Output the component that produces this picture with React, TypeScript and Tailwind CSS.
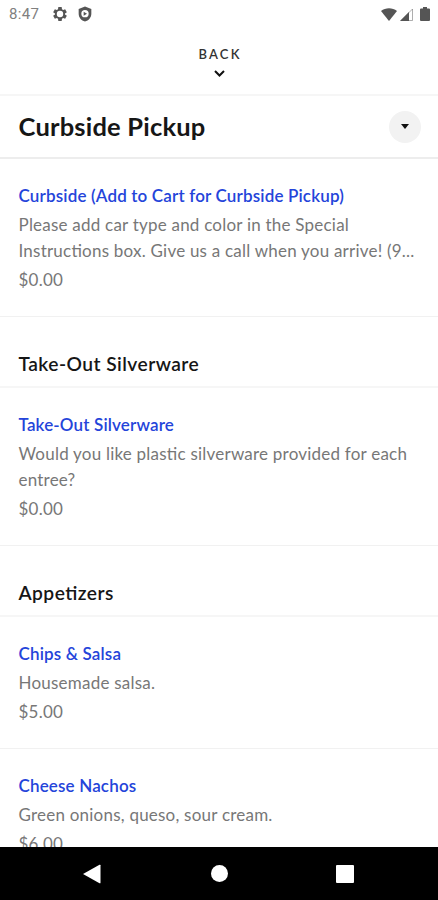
import React from 'react'

type Item = {
  name: string
  description: string
  price: string
}

type Section = {
  title?: string
  items: Item[]
}

const sections: Section[] = [
  {
    items: [
      {
        name: 'Curbside (Add to Cart for Curbside Pickup)',
        description:
          'Please add car type and color in the Special Instructions box. Give us a call when you arrive! (9...',
        price: '$0.00',
      },
    ],
  },
  {
    title: 'Take-Out Silverware',
    items: [
      {
        name: 'Take-Out Silverware',
        description: 'Would you like plastic silverware provided for each entree?',
        price: '$0.00',
      },
    ],
  },
  {
    title: 'Appetizers',
    items: [
      {
        name: 'Chips & Salsa',
        description: 'Housemade salsa.',
        price: '$5.00',
      },
      {
        name: 'Cheese Nachos',
        description: 'Green onions, queso, sour cream.',
        price: '$6.00',
      },
    ],
  },
]

function StatusBar() {
  return (
    <div className="flex h-7 shrink-0 items-center justify-between pl-[9px] pr-[8px] text-[#555]">
      <div className="flex items-center">
        <span className="w-[43px] font-[Roboto] text-[15px] tracking-[0.3px] text-[#808080]">8:47</span>
        <svg className="size-4" viewBox="0 0 24 24" fill="currentColor">
          <path
            fillRule="evenodd"
            d="M9.5 1.5h5l.5 3.500 1.800 1 2.900-1.100 2.600 4.500L19.500 11.200v1.600l2.800 1.800-2.600 4.500L16.800 18l-1.800 1-.5 3.500h-5L9 19l-1.800-1-2.900 1.100-2.600-4.500 2.800-1.800v-1.600L1.700 9.400l2.600-4.500L7.200 6 9 5zM12 7.200a4.800 4.800 0 1 0 0 9.600 4.800 4.800 0 0 0 0-9.600z"
          />
        </svg>
        <svg className="ml-[9px] size-4" viewBox="0 0 24 24" fill="currentColor">
          <path
            fillRule="evenodd"
            d="M12 .8 21.500 4.500v7c0 5.500-4 10.300-9.500 11.700C6.500 21.800 2.500 17 2.500 11.500v-7zM12 6a5.500 5.500 0 1 0 0 11 5.500 5.500 0 0 0 0-11zM10 8.500l5 3-5 3z"
          />
        </svg>
      </div>
      <div className="flex items-center">
        <svg className="h-[13px] w-4" viewBox="0 0 16 13" fill="currentColor">
          <path d="M0 3C4.500-.8 11.500-.8 16 3L8 13z" />
        </svg>
        <svg className="ml-[3px] h-[13px] w-[13px]" viewBox="0 0 13 13" fill="currentColor">
          <path d="M9 4v9H0z" />
          <path d="M12.500 1v11.500H1z" fill="none" stroke="currentColor" strokeWidth=".8" opacity=".6" />
        </svg>
        <svg className="ml-[7px] h-[14px] w-[10px]" viewBox="0 0 10 14" fill="currentColor">
          <path d="M3 0h4v1.500h2q1 0 1 1V13q0 1-1 1H1q-1 0-1-1V2.500q0-1 1-1h2z" />
        </svg>
      </div>
    </div>
  )
}

function MenuItem({ item }: { item: Item }) {
  return (
    <div className="border-b border-[#f1f1f1] px-[18.5px] pb-[23px] pt-6">
      <h3 className="text-[17px] font-semibold leading-[26px] tracking-[0.16px] text-[#2444da]">
        {item.name}
      </h3>
      <p className="mt-[3px] text-[17px] leading-[26px] tracking-[0.22px] text-[#777]">
        {item.description}
      </p>
      <p className="mt-[3px] text-[17px] leading-[26px] tracking-[0.22px] text-[#777]">{item.price}</p>
    </div>
  )
}

function NavBar() {
  return (
    <div className="flex h-[53px] shrink-0 items-center justify-between bg-black pl-[82px] pr-[84px] text-white">
      <svg className="h-[20px] w-[20px]" viewBox="0 0 20 20" fill="currentColor">
        <path d="M1 10 17.500.8q1-.5 1 .5v17.400q0 1-1 .5z" />
      </svg>
      <div className="size-[17px] rounded-full bg-white" />
      <div className="size-[18px] rounded-[1px] bg-white" />
    </div>
  )
}

function App() {
  return (
    <div className="flex h-[900px] w-[438px] flex-col overflow-hidden bg-white font-[Lato,sans-serif] [font-feature-settings:'liga'_1]">
      <StatusBar />
      <div className="flex h-[68px] shrink-0 flex-col items-center border-b-2 border-[#f6f6f6] pt-[18px]">
        <span className="pl-[2px] text-[13px] font-semibold leading-[17px] tracking-[2.2px] text-[#333]">BACK</span>
        <svg className="mt-[7px] h-[7px] w-[11px]" viewBox="0 0 11 7" fill="none" stroke="#111" strokeWidth="2">
          <path d="M1 1l4.500 4.500L10 1" />
        </svg>
      </div>
      <div className="flex h-[63px] shrink-0 items-center justify-between border-b-2 border-[#ededed] pl-[18.5px] pr-[17px]">
        <h1 className="text-[25.5px] font-bold tracking-[0.2px] text-[#161616]">Curbside Pickup</h1>
        <button className="flex size-8 items-center justify-center rounded-full bg-[#f2f2f2]">
          <svg className="h-[5px] w-[8px]" viewBox="0 0 8 5">
            <path d="M0 0h8L4 5z" fill="#111" />
          </svg>
        </button>
      </div>
      <main className="min-h-0 flex-1 overflow-hidden">
        {sections.map((section, idx) => (
          <section key={idx}>
            {section.title && (
              <h2 className="border-b-2 border-[#f6f6f6] pb-2 pl-[18.5px] pt-[33px] text-[19.2px] font-semibold leading-[28px] tracking-[0.45px] text-[#161616]">
                {section.title}
              </h2>
            )}
            {section.items.map((item) => (
              <MenuItem item={item} key={item.name} />
            ))}
          </section>
        ))}
      </main>
      <NavBar />
    </div>
  )
}

export default App
